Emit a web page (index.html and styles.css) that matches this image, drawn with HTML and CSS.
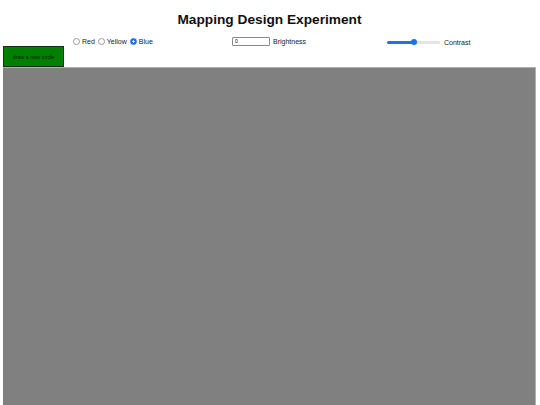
FILE: index.html
```html
<!DOCTYPE html>
<html>
<head>
<meta charset="utf-8">
<title>Mapping Design Experiment</title>
<link rel="stylesheet" href="styles.css">
</head>
<body>
<h1 class="title">Mapping Design Experiment</h1>
<div class="controls">
  <div class="colors">
    <label class="opt"><input type="radio" name="color" class="radio">Red</label>
    <label class="opt"><input type="radio" name="color" class="radio">Yellow</label>
    <label class="opt"><input type="radio" name="color" class="radio" checked>Blue</label>
  </div>
  <div class="bright">
    <input type="text" class="num" value="0">
    <span class="lbl">Brightness</span>
  </div>
  <div class="contrast">
    <input type="range" class="range" min="0" max="100" value="50">
    <span class="lbl">Contrast</span>
  </div>
</div>
<button class="draw">draw a new circle</button>
<div class="canvas"></div>
</body>
</html>
```
FILE: styles.css
```css
html, body {
  margin: 0;
  padding: 0;
  background: #ffffff;
  overflow: hidden;
}
body {
  padding: 0 4px 0 3px;
  font-family: "Liberation Sans", Arial, sans-serif;
  color: #000;
  height: 405px;
}
.title {
  margin: 0;
  padding-top: 12px;
  height: 22px;
  line-height: 16px;
  font-size: 13.7px;
  font-weight: bold;
  text-align: center;
  color: #111;
}
.controls {
  display: flex;
  align-items: center;
  height: 10px;
  padding: 2px 0 0 70px;
  font-size: 7px;
  color: #222;
}
.colors {
  display: flex;
  align-items: center;
  gap: 3px;
  width: 159px;
}
.opt {
  display: flex;
  align-items: center;
}
.radio {
  -webkit-appearance: none;
  appearance: none;
  box-sizing: border-box;
  width: 7px;
  height: 7px;
  margin: 0 2px 0 0;
  border: 1px solid #9a9a9a;
  border-radius: 50%;
  background: #fff;
}
.radio:checked {
  border-color: #1a73e8;
  background: radial-gradient(circle, #ffffff 0, #ffffff 25%, #1a73e8 40%);
}
.bright {
  display: flex;
  align-items: center;
  width: 155px;
}
.num {
  width: 32px;
  height: 7px;
  padding: 0 2px;
  margin: 0 3px 0 0;
  border: 1px solid #8a8a8a;
  font-size: 5px;
  font-family: "Liberation Sans", Arial, sans-serif;
  border-radius: 1px;
}
.contrast {
  display: flex;
  align-items: center;
  margin-top: 2px;
}
.range {
  -webkit-appearance: none;
  appearance: none;
  width: 53px;
  height: 3px;
  margin: 0 4px 0 0;
  border-radius: 2px;
  background: linear-gradient(to right, #1a73e8 0, #1a73e8 50%, #e4e4e4 50%, #e4e4e4 100%);
  border: none;
  outline: none;
}
.range::-webkit-slider-thumb {
  -webkit-appearance: none;
  appearance: none;
  width: 6px;
  height: 6px;
  border-radius: 50%;
  background: #1a73e8;
  border: none;
}
.draw {
  display: block;
  width: 61px;
  height: 21px;
  margin: 0;
  padding: 0;
  background: #008000;
  border: 1px solid #1c2a1c;
  color: #061a06;
  font-size: 5.4px;
  font-family: "Liberation Sans", Arial, sans-serif;
}
.canvas {
  height: 338px;
  background: #808080;
  border-top: 1px solid #b0b0b0;
  border-right: 1px solid #b0b0b0;
}
```
